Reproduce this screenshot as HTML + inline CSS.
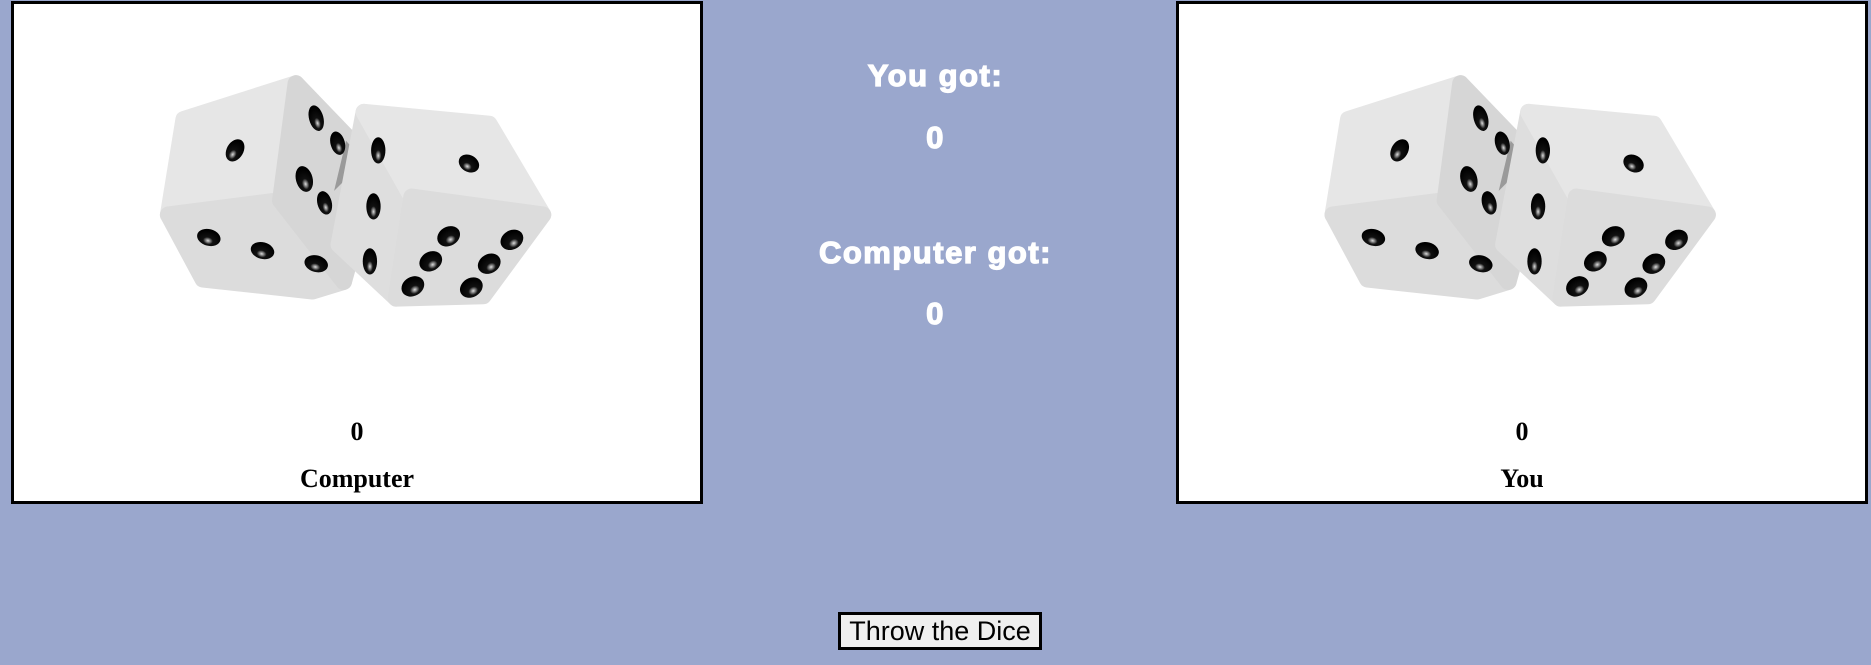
<!DOCTYPE html>
<html><head><style>
html,body{margin:0;padding:0;width:1871px;height:665px;background:#9aa7cd;overflow:hidden;position:relative;font-family:"Liberation Sans",Arial,sans-serif}
.box{position:absolute;top:1px;width:686px;height:497px;border:3px solid #000;background:#fff}
.box .n,.box .l{position:absolute;left:0;right:0;text-align:center;font-family:"Liberation Serif",serif;font-weight:bold;font-size:26px;color:#000}
.box .n{top:413px}.box .l{top:460px}
.c{position:absolute;left:0;width:1871px;text-align:center;color:#fff;font-weight:bold;font-size:31px;letter-spacing:1.5px;-webkit-text-stroke:1.3px #fff}
button{position:absolute;left:838px;top:612px;width:204px;height:38px;border:3px solid #000;background:#efefef;font-family:"Liberation Sans",Arial,sans-serif;font-size:27px;padding:0;color:#000}
svg{position:absolute;left:0;top:0}
</style></head><body>
<div class="box" style="left:11px"><div class="n">0</div><div class="l">Computer</div></div>
<div class="box" style="left:1176px"><div class="n">0</div><div class="l">You</div></div>
<div class="c" style="top:58px">You got:</div>
<div class="c" style="top:120px">0</div>
<div class="c" style="top:235px">Computer got:</div>
<div class="c" style="top:296px">0</div>
<button>Throw the Dice</button>
<svg width="1871" height="665" viewBox="0 0 1568 557.3">
<defs>
<radialGradient id="p" cx="0.5" cy="0.7" r="0.6"><stop offset="0" stop-color="#ddd"/><stop offset="0.35" stop-color="#111"/><stop offset="1" stop-color="#000"/></radialGradient>
<g id="dice">
<g stroke-linejoin="round" stroke-width="14">
<polygon points="248,70 154,100 141,180 235,168" fill="#e6e6e6" stroke="#e6e6e6"/>
<polygon points="141,180 170,234 262,244 288,236 235,168" fill="#dcdcdc" stroke="#dcdcdc"/>
<polygon points="248,70 298,122 298,200 288,236 235,168" fill="#d6d6d6" stroke="#d6d6d6"/>
</g>
<polygon points="290,118 305,135 280,160" fill="#9a9a9a"/>
<g fill="url(#p)">
<ellipse cx="197" cy="126" rx="7" ry="10" transform="rotate(30 197 126)"/>
<ellipse cx="265" cy="99" rx="6" ry="11" transform="rotate(-15 265 99)"/>
<ellipse cx="283" cy="120" rx="6" ry="10" transform="rotate(-15 283 120)"/>
<ellipse cx="255" cy="150" rx="7" ry="11" transform="rotate(-15 255 150)"/>
<ellipse cx="272" cy="170" rx="6" ry="10" transform="rotate(-15 272 170)"/>
<ellipse cx="175" cy="199" rx="10" ry="7" transform="rotate(15 175 199)"/>
<ellipse cx="220" cy="210" rx="10" ry="7" transform="rotate(15 220 210)"/>
<ellipse cx="265" cy="221" rx="10" ry="7" transform="rotate(15 265 221)"/>
</g>
<g stroke-linejoin="round" stroke-width="14">
<polygon points="305,94 345,165 332,250 284,205" fill="#dedede" stroke="#dedede"/>
<polygon points="305,94 410,104 455,180 345,165" fill="#e6e6e6" stroke="#e6e6e6"/>
<polygon points="345,165 455,180 405,248 332,250" fill="#dcdcdc" stroke="#dcdcdc"/>
</g>
<g fill="url(#p)">
<ellipse cx="317" cy="126" rx="6" ry="11"/>
<ellipse cx="313" cy="173" rx="6" ry="11"/>
<ellipse cx="310" cy="219" rx="6" ry="11"/>
<ellipse cx="393" cy="137" rx="9" ry="7" transform="rotate(30 393 137)"/>
<ellipse cx="376" cy="198" rx="10" ry="8" transform="rotate(-30 376 198)"/>
<ellipse cx="429" cy="201" rx="10" ry="8" transform="rotate(-30 429 201)"/>
<ellipse cx="361" cy="219" rx="10" ry="8" transform="rotate(-30 361 219)"/>
<ellipse cx="410" cy="221" rx="10" ry="8" transform="rotate(-30 410 221)"/>
<ellipse cx="346" cy="240" rx="10" ry="8" transform="rotate(-30 346 240)"/>
<ellipse cx="395" cy="241" rx="10" ry="8" transform="rotate(-30 395 241)"/>
</g>
</g>
</defs>
<use href="#dice"/>
<use href="#dice" transform="translate(976,0)"/>
</svg>
</body></html>
